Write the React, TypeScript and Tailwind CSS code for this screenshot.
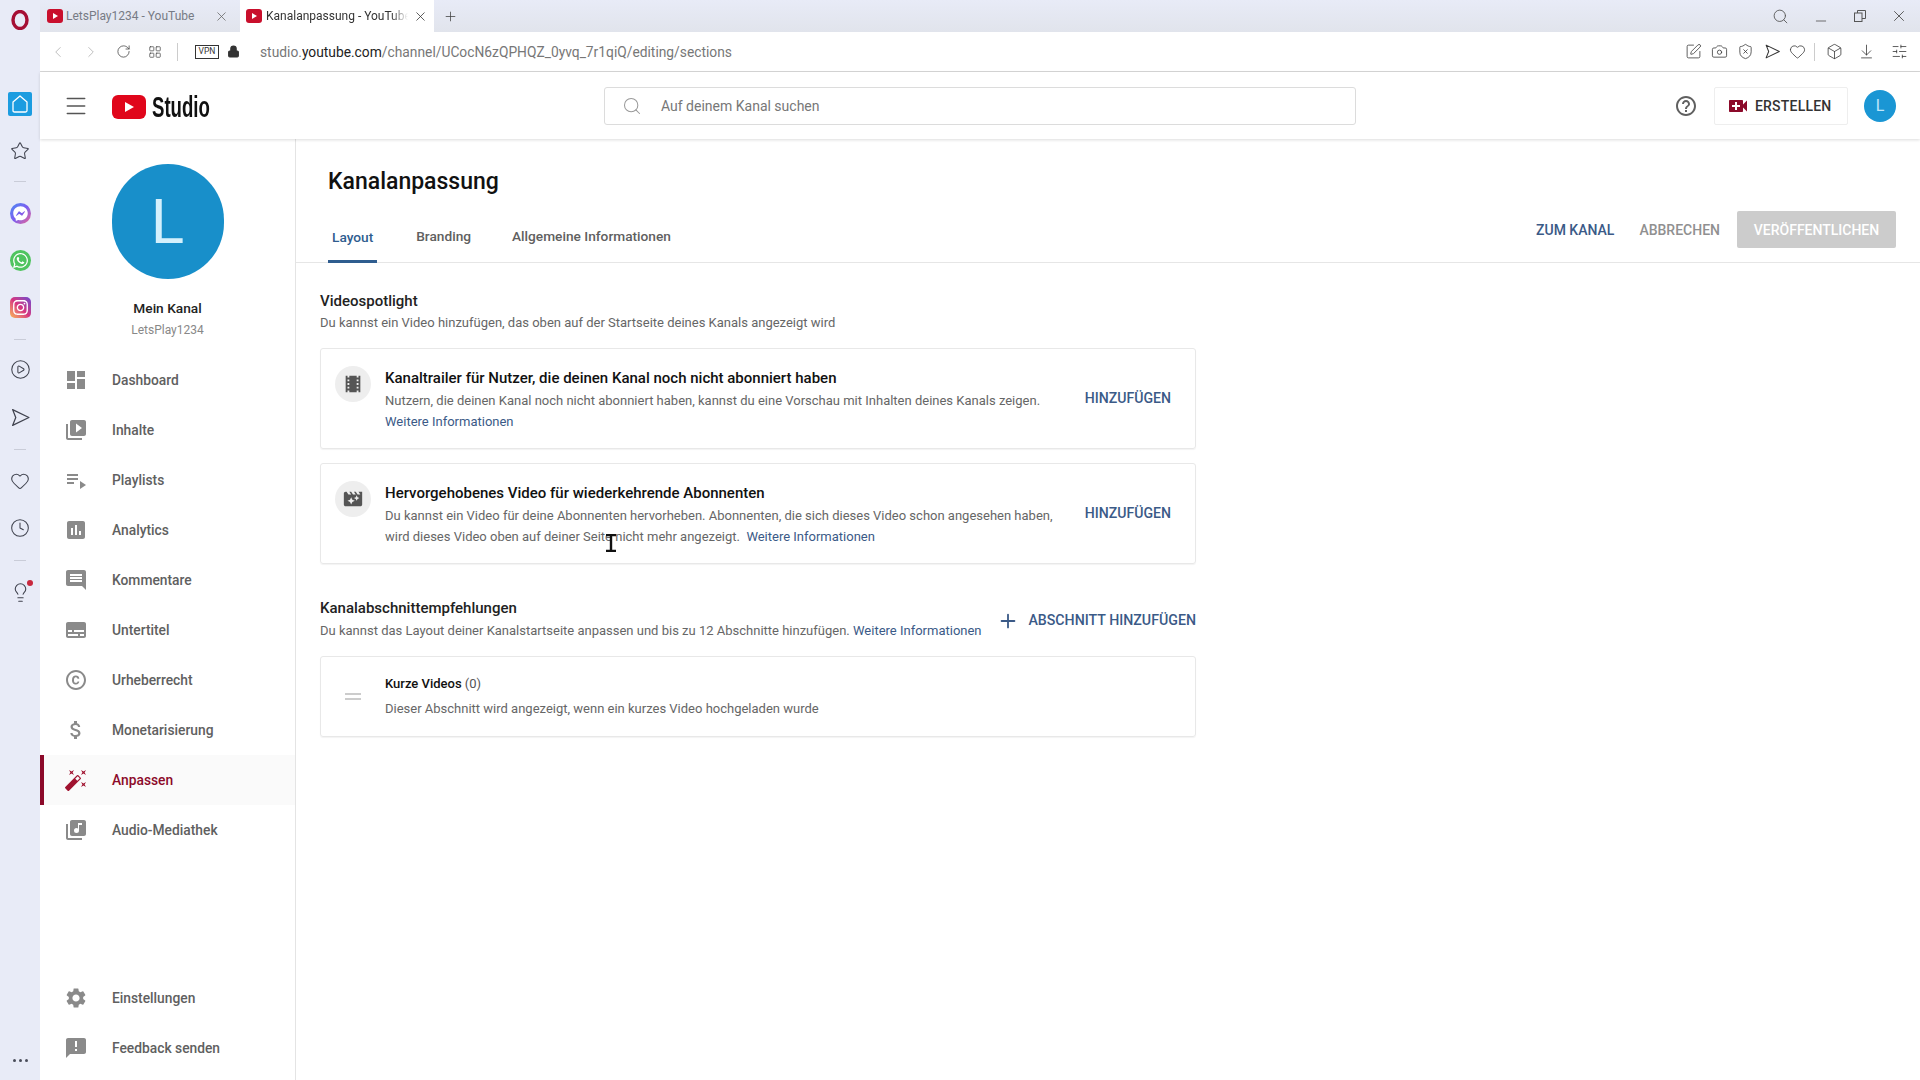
import type { ReactNode } from "react";
import {
  ArrowDownToLine,
  Box,
  Camera,
  ChevronLeft,
  ChevronRight,
  CirclePlay,
  Clock,
  Heart,
  LayoutGrid,
  Lightbulb,
  Lock,
  Menu,
  Minus,
  Plus,
  RotateCw,
  Search,
  ShieldX,
  SlidersHorizontal,
  SquarePen,
  Star,
  X,
} from "lucide-react";
import { FaFacebookMessenger, FaWhatsapp, FaInstagram } from "react-icons/fa";
import {
  MdAnnouncement,
  MdAssessment,
  MdAttachMoney,
  MdAutoFixHigh,
  MdCopyright,
  MdDashboard,
  MdHelpOutline,
  MdLibraryMusic,
  MdLocalMovies,
  MdMovieFilter,
  MdPlaylistPlay,
  MdSettings,
  MdSubtitles,
  MdVideoCall,
  MdVideoLibrary,
  MdInsertComment,
} from "react-icons/md";

const navItems = [
  { label: "Dashboard", icon: <MdDashboard size={24} /> },
  { label: "Inhalte", icon: <MdVideoLibrary size={24} /> },
  { label: "Playlists", icon: <MdPlaylistPlay size={24} /> },
  { label: "Analytics", icon: <MdAssessment size={24} /> },
  { label: "Kommentare", icon: <MdInsertComment size={24} /> },
  { label: "Untertitel", icon: <MdSubtitles size={24} /> },
  { label: "Urheberrecht", icon: <MdCopyright size={24} /> },
  { label: "Monetarisierung", icon: <MdAttachMoney size={24} /> },
  { label: "Anpassen", icon: <MdAutoFixHigh size={24} />, active: true },
  { label: "Audio-Mediathek", icon: <MdLibraryMusic size={24} /> },
];

function Favicon() {
  return (
    <span className="flex h-[14px] w-4 shrink-0 items-center justify-center rounded-[3px] bg-[#c90f2c]">
      <span className="h-0 w-0 border-y-[3.5px] border-l-[5px] border-y-transparent border-l-white" />
    </span>
  );
}

function PlaneIcon({ size, className }: { size: number; className?: string }) {
  return (
    <svg className={className} width={size} height={size} viewBox="0 0 20 20" fill="none" stroke="currentColor" strokeWidth="1.2" strokeLinejoin="round">
      <path d="M2.5 2.5L18 10L2.5 17.5L5.5 10Z" />
    </svg>
  );
}

function RailDivider({ className }: { className: string }) {
  return <div className={`h-px w-3 bg-[#c9ccd8] ${className}`} />;
}

function Rail() {
  const stroke = "text-[#3f424e]";
  return (
    <aside className="flex w-10 shrink-0 flex-col items-center bg-[#e8ebf7]">
      <svg className="mt-[10px] h-5 w-5" viewBox="0 0 20 20">
        <ellipse cx="10" cy="10" rx="7" ry="8.5" fill="none" stroke="#a50f34" strokeWidth="3.4" />
      </svg>
      <div className="mt-[62px] flex h-6 w-6 items-center justify-center rounded-[2px] bg-[#1c9ce0] text-white">
        <svg width="18" height="20" viewBox="0 0 18 20" fill="none" stroke="currentColor" strokeWidth="1.3" strokeLinejoin="round">
          <path d="M9 2L16 8V16.5Q16 18 14.5 18H3.5Q2 18 2 16.5V8Z" />
        </svg>
      </div>
      <Star size={20} strokeWidth={1.25} className={`mt-[25px] ${stroke}`} />
      <RailDivider className="mt-[20px]" />
      <div className="mt-[21px] flex h-[21px] w-[21px] items-center justify-center rounded-full bg-gradient-to-br from-[#3d8bf2] via-[#7b5cf0] to-[#f0568a] text-white">
        <FaFacebookMessenger size={15} />
      </div>
      <div className="mt-[26px] flex h-[21px] w-[21px] items-center justify-center rounded-full bg-[#4fc45f] text-white">
        <FaWhatsapp size={17} />
      </div>
      <div className="mt-[26px] flex h-[21px] w-[21px] items-center justify-center rounded-[5px] bg-gradient-to-tr from-[#f9b44a] via-[#d6317f] to-[#6d3fd0] text-white">
        <FaInstagram size={17} />
      </div>
      <RailDivider className="mt-[21px]" />
      <CirclePlay size={21} strokeWidth={1.2} className={`mt-[19px] ${stroke}`} />
      <PlaneIcon size={21} className={`mt-[27px] ${stroke}`} />
      <RailDivider className="mt-[21px]" />
      <Heart size={20} strokeWidth={1.25} className={`mt-[21px] ${stroke}`} />
      <Clock size={20} strokeWidth={1.25} className={`mt-[27px] ${stroke}`} />
      <RailDivider className="mt-[22px]" />
      <div className="relative mt-[21px]">
        <Lightbulb size={21} strokeWidth={1.25} className={stroke} />
        <span className="absolute -right-[2px] -top-[2px] h-[6px] w-[6px] rounded-full bg-[#c8283e]" />
      </div>
      <div className="mb-[18px] mt-auto flex gap-[3px]">
        <span className="h-[3px] w-[3px] rounded-full bg-[#4a4d5a]" />
        <span className="h-[3px] w-[3px] rounded-full bg-[#4a4d5a]" />
        <span className="h-[3px] w-[3px] rounded-full bg-[#4a4d5a]" />
      </div>
    </aside>
  );
}

function TabStrip() {
  return (
    <div className="flex h-8 shrink-0 items-center bg-gradient-to-b from-[#e8ebf7] to-[#e1e4ec] text-xs">
      <div className="flex h-full w-[200px] items-center pl-[7px] text-[#777b85]">
        <Favicon />
        <span className="ml-[3px] w-[148px] whitespace-nowrap">LetsPlay1234 - YouTube</span>
        <X size={15} strokeWidth={1.25} className="text-[#666]" />
      </div>
      <div className="flex h-full w-[194px] items-center bg-white pl-[6px] text-[#333]">
        <Favicon />
        <span className="ml-[4px] w-[142px] whitespace-nowrap [mask-image:linear-gradient(90deg,black_88%,transparent)]">Kanalanpassung - YouTube</span>
        <X size={15} strokeWidth={1.25} className="ml-[5px] text-[#333]" />
      </div>
      <Plus size={15} strokeWidth={1.25} className="ml-[9px] text-[#444]" />
      <div className="ml-auto flex items-center pr-3 text-[#555]">
        <Search size={17} strokeWidth={1.25} />
        <Minus size={16} strokeWidth={1.25} className="ml-[24px] mt-[10px]" />
        <svg className="ml-[24px]" width="14" height="14" viewBox="0 0 14 14" fill="none" stroke="currentColor">
          <rect x="1.5" y="4" width="7.5" height="8.5" />
          <path d="M4.5 4V1.5H12.5V9.5H9" />
        </svg>
        <X size={18} strokeWidth={1.25} className="ml-[23px]" />
      </div>
    </div>
  );
}

function AddressBar() {
  const icon = "shrink-0 text-[#333]";
  return (
    <div className="flex h-10 shrink-0 items-center border-b border-[#d8d8d8] bg-white pr-3">
      <ChevronLeft size={18} strokeWidth={1} className="ml-[9px] text-[#aaa]" />
      <ChevronRight size={18} strokeWidth={1} className="ml-[15px] text-[#aaa]" />
      <RotateCw size={15} strokeWidth={1.25} className="ml-[16px] text-[#444]" />
      <LayoutGrid size={14} strokeWidth={1.25} className="ml-[17px] text-[#444]" />
      <div className="ml-[15px] h-[18px] w-px bg-[#ccc]" />
      <span className="ml-[17px] flex h-[14px] w-6 items-center justify-center border border-[#333] text-[8.5px] leading-none text-[#333]">
        VPN
      </span>
      <Lock size={13} strokeWidth={2} fill="#333" className="ml-[8px] text-[#333]" />
      <span className="ml-[20px] mt-[2px] whitespace-nowrap text-[13.8px] text-[#777]">
        studio.<span className="text-[#222]">youtube.com</span>/channel/UCocN6zQPHQZ_0yvq_7r1qiQ/editing/sections
      </span>
      <div className="ml-auto flex items-center">
        <SquarePen size={17} strokeWidth={1.1} className={icon} />
        <Camera size={17} strokeWidth={1.1} className={`ml-[9px] ${icon}`} />
        <ShieldX size={17} strokeWidth={1.1} className={`ml-[9px] ${icon}`} />
        <PlaneIcon size={17} className={`ml-[10px] ${icon}`} />
        <Heart size={17} strokeWidth={1.1} className={`ml-[8px] ${icon}`} />
        <div className="ml-[8px] h-[18px] w-px bg-[#ccc]" />
        <Box size={17} strokeWidth={1.1} className={`ml-[11px] ${icon}`} />
        <ArrowDownToLine size={17} strokeWidth={1.1} className={`ml-[15px] ${icon}`} />
        <SlidersHorizontal size={17} strokeWidth={1.1} className={`ml-[16px] ${icon}`} />
      </div>
    </div>
  );
}

function StudioHeader() {
  return (
    <header className="z-10 flex h-[67px] shrink-0 items-center bg-white pr-6 shadow-[0_1px_3px_rgba(0,0,0,0.14)]">
      <Menu size={26} strokeWidth={1.4} className="ml-[23px] text-[#555]" />
      <div className="ml-[23px] mt-[2px] flex h-6 w-[34px] items-center justify-center rounded-[6px] bg-[#e0061b]">
        <span className="h-0 w-0 border-y-[5px] border-l-[9px] border-y-transparent border-l-white" />
      </div>
      <div className="ml-[6px] mt-[2px] w-[56px]">
        <span className="block origin-left scale-x-[0.62] whitespace-nowrap font-['Liberation_Sans'] text-[30px] font-bold leading-none text-[#111]">
          Studio
        </span>
      </div>
      <div className="ml-[396px] flex h-[38px] w-[752px] items-center rounded-[3px] border border-[#dcdcdc] pl-[17px]">
        <Search size={20} strokeWidth={1.25} className="text-[#999]" />
        <span className="ml-[19px] text-sm text-[#777]">Auf deinem Kanal suchen</span>
      </div>
      <MdHelpOutline size={24} className="ml-auto text-[#606060]" />
      <div className="ml-[16px] flex h-[38px] w-[134px] items-center rounded-[2px] border border-[#eee] pl-[11px]">
        <MdVideoCall size={24} className="text-[#8c0a2a]" />
        <span className="ml-[5px] text-sm font-medium tracking-[0.2px] text-[#333]">ERSTELLEN</span>
      </div>
      <div className="ml-4 flex h-8 w-8 items-center justify-center rounded-full bg-[#1a96d4] text-base text-[#bfe6fa]">
        L
      </div>
    </header>
  );
}

function NavRow({ label, icon, active }: { label: string; icon: ReactNode; active?: boolean }) {
  return (
    <div
      className={
        active
          ? "flex h-[50px] items-center border-l-4 border-[#8c0a2a] bg-[#fafafa] pl-[20px] text-[#8c0a2a]"
          : "flex h-[50px] items-center pl-6 text-[#606060]"
      }
    >
      <span className={active ? "text-[#a0122f]" : "text-[#8a8a8a]"}>{icon}</span>
      <span className="ml-6 text-[13.8px] font-medium">{label}</span>
    </div>
  );
}

function Sidebar() {
  return (
    <nav className="flex w-[256px] shrink-0 flex-col border-r border-[#e4e4e4] bg-white pb-[7px] pt-[25px]">
      <div className="mx-auto flex h-[115px] w-[112px] items-center justify-center rounded-full bg-[#188fca] text-[62px] leading-none text-[#d4f0fc]">
        L
      </div>
      <div className="mt-[19px] text-center text-[13.7px] font-medium leading-5 text-[#222]">Mein Kanal</div>
      <div className="mb-[16px] mt-[3px] text-center text-xs leading-[18px] text-[#888]">LetsPlay1234</div>
      {navItems.map((item) => (
        <NavRow key={item.label} {...item} />
      ))}
      <div className="mt-auto">
        <NavRow label="Einstellungen" icon={<MdSettings size={24} />} />
        <NavRow label="Feedback senden" icon={<MdAnnouncement size={24} />} />
      </div>
    </nav>
  );
}

function SpotlightCard({
  icon,
  title,
  children,
  className,
}: {
  icon: ReactNode;
  title: string;
  children: ReactNode;
  className: string;
}) {
  return (
    <div className={`flex items-center rounded-[3px] border border-[#e8e8e8] pl-[14px] pr-6 shadow-[0_1px_1px_rgba(0,0,0,0.05)] ${className}`}>
      <div className="flex self-start pt-[17px]">
        <div className="flex h-9 w-9 shrink-0 items-center justify-center rounded-full bg-[#eeeeee] text-[#555]">
          {icon}
        </div>
        <div className="ml-[14px] pt-[2px]">
          <div className="text-[15px] font-medium leading-5 text-[#111]">{title}</div>
          <div className="mt-[2px] whitespace-nowrap text-[13px] leading-[21px] text-[#666]">{children}</div>
        </div>
      </div>
      <span className="ml-auto text-[14.1px] font-medium text-[#3b5a87]">HINZUFÜGEN</span>
    </div>
  );
}

function Content() {
  const link = "text-[#3b5a87]";
  return (
    <main className="min-w-0 flex-1 bg-white">
      <h1 className="mt-[27px] h-8 pl-8 text-[23px] font-medium leading-8 text-[#111]">Kanalanpassung</h1>
      <div className="flex h-[65px] justify-between border-b border-[#e6e6e6] pl-8 pr-6">
        <div className="flex self-end text-[13.7px] font-medium text-[#606060]">
          <span className="-mb-px flex h-[51px] items-center border-b-[3px] border-[#2f5d8f] px-1 pt-[2px] text-[#2f5d8f]">Layout</span>
          <span className="ml-[35px] flex h-[50px] items-center px-1 pb-[1px]">Branding</span>
          <span className="ml-[33px] flex h-[50px] items-center px-1 pb-[1px]">Allgemeine Informationen</span>
        </div>
        <div className="mt-[13px] flex h-[37px] items-center text-sm font-medium">
          <span className={link}>ZUM KANAL</span>
          <span className="ml-[25px] text-[#909090]">ABBRECHEN</span>
          <span className="ml-[17px] flex h-[37px] w-[159px] items-center justify-center rounded-[2px] bg-[#cccccc] text-white">VERÖFFENTLICHEN</span>
        </div>
      </div>
      <section className="w-[900px] pl-6 pt-[28px]">
        <div className="text-[15px] font-medium leading-5 text-[#222]">Videospotlight</div>
        <div className="mt-[3px] text-[13px] leading-[18px] text-[#666]">
          Du kannst ein Video hinzufügen, das oben auf der Startseite deines Kanals angezeigt wird
        </div>
        <SpotlightCard
          className="mt-4 h-[101px]"
          icon={<MdLocalMovies size={22} />}
          title="Kanaltrailer für Nutzer, die deinen Kanal noch nicht abonniert haben"
        >
          Nutzern, die deinen Kanal noch nicht abonniert haben, kannst du eine Vorschau mit Inhalten deines Kanals zeigen.
          <br />
          <span className={link}>Weitere Informationen</span>
        </SpotlightCard>
        <SpotlightCard
          className="mt-[14px] h-[101px]"
          icon={<MdMovieFilter size={22} />}
          title="Hervorgehobenes Video für wiederkehrende Abonnenten"
        >
          Du kannst ein Video für deine Abonnenten hervorheben. Abonnenten, die sich dieses Video schon angesehen haben,
          <br />
          wird dieses Video oben auf deiner Seite nicht mehr angezeigt.&nbsp; <span className={link}>Weitere Informationen</span>
        </SpotlightCard>
        <div className="mt-[34px] flex items-center justify-between">
          <div>
            <div className="text-[15px] font-medium leading-5 text-[#222]">Kanalabschnittempfehlungen</div>
            <div className="mt-1 text-[13px] leading-[18px] text-[#666]">
              Du kannst das Layout deiner Kanalstartseite anpassen und bis zu 12 Abschnitte hinzufügen.{" "}
              <span className={link}>Weitere Informationen</span>
            </div>
          </div>
          <div className={`mt-1 flex items-center text-[14.2px] font-medium ${link}`}>
            <Plus size={22} strokeWidth={2} className="mr-[9px]" />
            ABSCHNITT HINZUFÜGEN
          </div>
        </div>
        <div className="mt-4 flex h-[81px] items-center rounded-[3px] border border-[#e8e8e8] pl-[24px] shadow-[0_1px_1px_rgba(0,0,0,0.05)]">
          <div className="flex w-4 flex-col gap-[3px]">
            <span className="h-[2px] bg-[#cccccc]" />
            <span className="h-[2px] bg-[#cccccc]" />
          </div>
          <div className="ml-6">
            <div className="text-[13px] leading-5 text-[#111]">
              <span className="font-medium">Kurze Videos</span> <span className="text-[#555]">(0)</span>
            </div>
            <div className="mt-[5px] text-[13px] leading-5 text-[#666]">
              Dieser Abschnitt wird angezeigt, wenn ein kurzes Video hochgeladen wurde
            </div>
          </div>
        </div>
      </section>
    </main>
  );
}

export default function App() {
  return (
    <div className="relative flex h-[1080px] w-[1920px] overflow-hidden bg-white font-['Roboto',sans-serif]">
      <Rail />
      <div className="flex min-w-0 flex-1 flex-col">
        <TabStrip />
        <AddressBar />
        <StudioHeader />
        <div className="flex min-h-0 flex-1">
          <Sidebar />
          <Content />
        </div>
      </div>
      {/* mouse cursor */}
      <svg className="absolute left-[605px] top-[534px]" width="12" height="18" viewBox="0 0 12 18" fill="none" stroke="#111" strokeWidth="2">
        <path d="M1 1H11M1 17H11M6 1V17" strokeWidth="2.4" />
      </svg>
    </div>
  );
}
